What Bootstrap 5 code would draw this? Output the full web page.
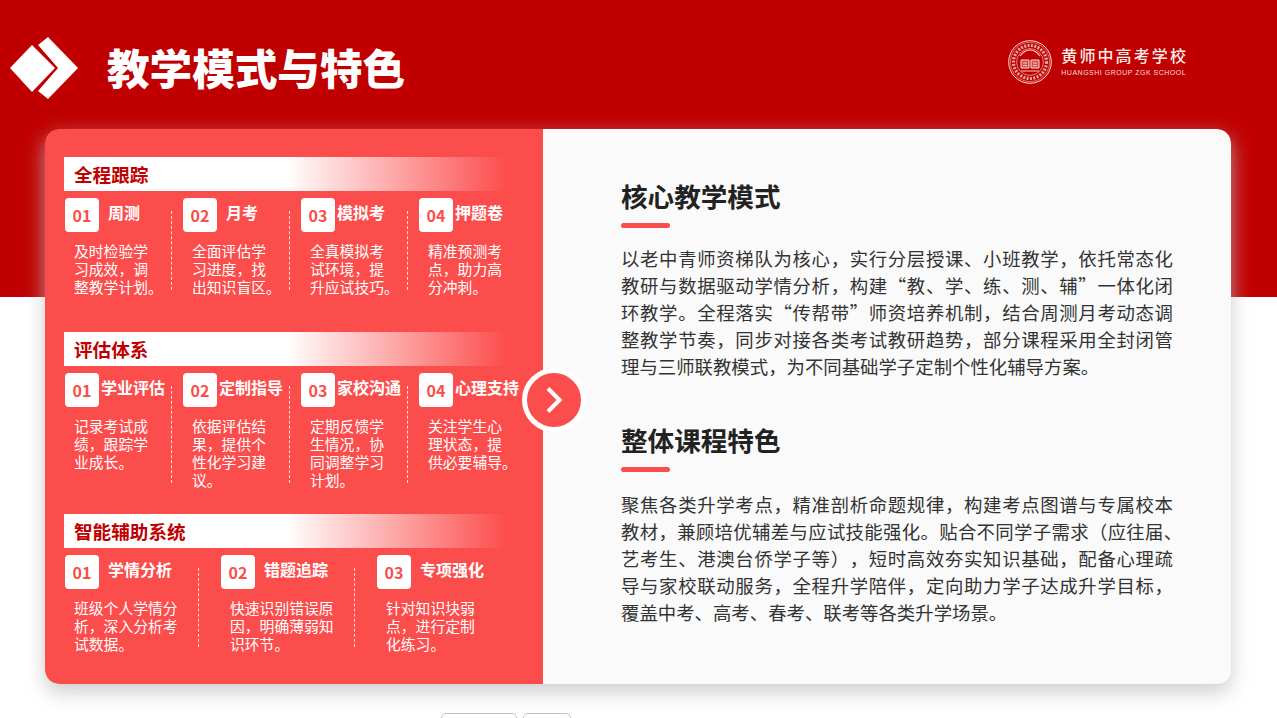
<!DOCTYPE html>
<html lang="zh-CN">
<head>
  <meta charset="UTF-8">
  <title>教学模式与特色</title>
  <link href="https://cdn.jsdelivr.net/npm/bootstrap@5.3.3/dist/css/bootstrap.min.css" rel="stylesheet">
  <style>
    html, body { height: 718px; overflow: hidden; }
    body {
      font-family: "Noto Sans CJK SC", "Noto Sans", sans-serif;
      background: linear-gradient(#c00000 297px, #fff 297px);
      text-spacing-trim: space-all;
    }
    .top-bar { height: 129px; padding: 7px 89px 0 10px; }
    .page-title { font-size: 42.6px; font-weight: 900; margin: 0 0 2px 29px; line-height: 1; }
    .school-logo { margin-bottom: 12px; }
    .school-seal { margin-right: 9px; }
    .school-name { font-size: 16px; letter-spacing: 2.1px; line-height: 20px; color: #fbeee8; font-weight: 500; margin-top: -2px; }
    .school-en { font-family: "Liberation Sans", sans-serif; font-size: 7px; letter-spacing: .5px; line-height: 10px; color: #f6dfd6; margin-top: 3px; white-space: nowrap; }
    .main-card { height: 555px; margin: 0 46px 0 45px; border-radius: 14px; box-shadow: 0 8px 20px rgba(192,192,192,.8); }
    .left-panel { width: 498px; background: #fc4d4d; padding: 28px 0 0 19px; border-radius: 14px 0 0 14px; }
    .right-panel { background: #fafafa; padding: 45px 50px 0 78px; border-radius: 0 14px 14px 0; }
    .sec-title {
      width: 443px; height: 34px; padding-left: 10px; line-height: 34px;
      font-size: 18.6px; font-weight: 700; color: #c00000;
      background: linear-gradient(90deg, #fff 50%, rgba(255,255,255,0) 100%);
    }
    .sec-first { margin-bottom: 36px; }
    .sec-second { margin-bottom: 25px; }
    .item-row { margin-top: 7px; margin-left: 1px; }
    .item { width: 106px; }
    .item-wide { width: 133px; }
    .sep { width: 0; border-left: 1px dashed rgba(255,255,255,.8); margin: 13px 11px 6px 0; }
    .sep-wide { margin-right: 22px; }
    .num { width: 34px; height: 34px; border-radius: 4px; color: #fc4d4d; font-size: 16px; font-weight: 700; line-height: 35px; }
    .lbl { width: 46px; margin-left: 2px; font-size: 16px; font-weight: 700; line-height: 28px; white-space: nowrap; }
    .lbl-wide { width: auto; margin-left: 9px; }
    .desc { margin: 10px 0 0 9px; font-size: 14.8px; line-height: 18px; white-space: nowrap; color: #fff; }
    .arrow-btn { left: 522px; top: 368px; width: 64px; height: 64px; background: #fc4d4d; border: 5px solid #fff; }
    .block-title { font-size: 26.6px; font-weight: 700; line-height: 44px; color: #222; margin: 0; }
    .title-bar { width: 49px; height: 5px; border-radius: 3px; background: #fc4d4d; margin-top: 5px; }
    .block-text { width: 552px; font-size: 18.4px; line-height: 27px; color: #333; margin: 17px 0 0; }
    .full-line { display: block; text-align: justify; text-align-last: justify; }
    .second-block { margin-top: 38px; }
    .second-text { margin-top: 19px; }
    .half-punct { font-feature-settings: "halt"; }
    .page-btns { padding-left: 441px; margin-top: 29px; gap: 6px; }
    .page-btn { height: 30px; border: 1px solid #c4c4c4; border-radius: 5px; background: #fff; padding: 0; }
    .page-btn-a { width: 76px; }
    .page-btn-b { width: 48px; }
  </style>
</head>
<body>

<div class="top-bar d-flex align-items-center text-white">
  <svg width="68" height="62" viewBox="10 37 68 62" fill="#fff" class="flex-shrink-0">
    <polygon points="10,68 32,45 55,68 32,92"/>
    <polygon points="38,45 48,37 78,68 48,99 38,91 58,68"/>
  </svg>
  <h1 class="page-title">教学模式与特色</h1>
  <div class="school-logo ms-auto d-flex align-items-center">
    <svg width="44" height="44" viewBox="0 0 44 44" fill="none" stroke="#f6dfd6" class="school-seal">
      <circle cx="22" cy="22" r="21.3" stroke-width="1"/>
      <circle cx="22" cy="22" r="19.6" stroke-width=".5"/>
      <circle cx="22" cy="22" r="16.5" stroke-width="3.2" stroke-dasharray="2 1.4" opacity=".75"/>
      <circle cx="22" cy="22" r="13.4" stroke-width=".6"/>
      <path d="M12 16c3-4 7-6 10-6s7 2 10 6" stroke-width="1.2"/>
      <path d="M13 20h8v8h-8zM23 20h8v8h-8z" fill="#f6dfd6" fill-opacity=".35" stroke-width="1"/>
      <path d="M15 23h4M15 25.500h4M25 23h4M25 25.500h4M13 31h18" stroke-width=".9"/>
    </svg>
    <div>
      <div class="school-name">黄师中高考学校</div>
      <div class="school-en">HUANGSHI GROUP ZGK SCHOOL</div>
    </div>
  </div>
</div>

<div class="main-card d-flex overflow-hidden">
  <div class="left-panel flex-shrink-0">

    <div class="sec-first">
      <div class="sec-title">全程跟踪</div>
      <div class="item-row d-flex">
        <div class="item">
          <div class="d-flex text-white"><div class="num bg-white text-center">01</div><div class="lbl text-center">周测</div></div>
          <p class="desc">及时检验学<br>习成效，调<br>整教学计划。</p>
        </div>
        <div class="sep"></div>
        <div class="item">
          <div class="d-flex text-white"><div class="num bg-white text-center">02</div><div class="lbl text-center">月考</div></div>
          <p class="desc">全面评估学<br>习进度，找<br>出知识盲区。</p>
        </div>
        <div class="sep"></div>
        <div class="item">
          <div class="d-flex text-white"><div class="num bg-white text-center">03</div><div class="lbl text-center">模拟考</div></div>
          <p class="desc">全真模拟考<br>试环境，提<br>升应试技巧。</p>
        </div>
        <div class="sep"></div>
        <div class="item">
          <div class="d-flex text-white"><div class="num bg-white text-center">04</div><div class="lbl text-center">押题卷</div></div>
          <p class="desc">精准预测考<br>点，助力高<br>分冲刺。</p>
        </div>
      </div>
    </div>

    <div class="sec-second">
      <div class="sec-title">评估体系</div>
      <div class="item-row d-flex">
        <div class="item">
          <div class="d-flex text-white"><div class="num bg-white text-center">01</div><div class="lbl">学业评估</div></div>
          <p class="desc">记录考试成<br>绩，跟踪学<br>业成长。</p>
        </div>
        <div class="sep"></div>
        <div class="item">
          <div class="d-flex text-white"><div class="num bg-white text-center">02</div><div class="lbl">定制指导</div></div>
          <p class="desc">依据评估结<br>果，提供个<br>性化学习建<br>议。</p>
        </div>
        <div class="sep"></div>
        <div class="item">
          <div class="d-flex text-white"><div class="num bg-white text-center">03</div><div class="lbl">家校沟通</div></div>
          <p class="desc">定期反馈学<br>生情况，协<br>同调整学习<br>计划。</p>
        </div>
        <div class="sep"></div>
        <div class="item">
          <div class="d-flex text-white"><div class="num bg-white text-center">04</div><div class="lbl">心理支持</div></div>
          <p class="desc">关注学生心<br>理状态，提<br>供必要辅导。</p>
        </div>
      </div>
    </div>

    <div>
      <div class="sec-title">智能辅助系统</div>
      <div class="item-row d-flex">
        <div class="item-wide">
          <div class="d-flex text-white"><div class="num bg-white text-center">01</div><div class="lbl lbl-wide">学情分析</div></div>
          <p class="desc">班级个人学情分<br>析，深入分析考<br>试数据。</p>
        </div>
        <div class="sep sep-wide"></div>
        <div class="item-wide">
          <div class="d-flex text-white"><div class="num bg-white text-center">02</div><div class="lbl lbl-wide">错题追踪</div></div>
          <p class="desc">快速识别错误原<br>因，明确薄弱知<br>识环节。</p>
        </div>
        <div class="sep sep-wide"></div>
        <div class="item-wide">
          <div class="d-flex text-white"><div class="num bg-white text-center">03</div><div class="lbl lbl-wide">专项强化</div></div>
          <p class="desc">针对知识块弱<br>点，进行定制<br>化练习。</p>
        </div>
      </div>
    </div>
  </div>

  <div class="right-panel flex-grow-1">
    <h2 class="block-title">核心教学模式</h2>
    <div class="title-bar"></div>
    <p class="block-text">
      <span class="full-line">以老中青师资梯队为核心，实行分层授课、小班教学，依托常态化</span>
      <span class="full-line">教研与数据驱动学情分析，构建“教、学、练、测、辅”一体化闭</span>
      <span class="full-line">环教学。全程落实“传帮带”师资培养机制，结合周测月考动态调</span>
      <span class="full-line">整教学节奏，同步对接各类考试教研趋势，部分课程采用全封闭管</span>
      理与三师联教模式，为不同基础学子定制个性化辅导方案。
    </p>
    <h2 class="block-title second-block">整体课程特色</h2>
    <div class="title-bar"></div>
    <p class="block-text second-text">
      <span class="full-line">聚焦各类升学考点，精准剖析命题规律，构建考点图谱与专属校本</span>
      <span class="full-line">教材，兼顾培优辅差与应试技能强化。贴合不同学子需求（应往届<span class="half-punct">、</span></span>
      <span class="full-line">艺考生、港澳台侨学子等），短时高效夯实知识基础，配备心理疏</span>
      <span class="full-line">导与家校联动服务，全程升学陪伴，定向助力学子达成升学目标，</span>
      覆盖中考、高考、春考、联考等各类升学场景。
    </p>
  </div>
</div>

<div class="arrow-btn position-absolute rounded-circle d-flex align-items-center justify-content-center">
  <svg width="20" height="28" viewBox="0 0 20 28" fill="none" stroke="#fff" stroke-width="4"><path d="M4 2.500 15.500 14 4 25.500"/></svg>
</div>

<div class="page-btns d-flex">
  <button type="button" class="page-btn page-btn-a"></button>
  <button type="button" class="page-btn page-btn-b"></button>
</div>

<script src="https://cdn.jsdelivr.net/npm/bootstrap@5.3.3/dist/js/bootstrap.bundle.min.js"></script>
</body>
</html>
